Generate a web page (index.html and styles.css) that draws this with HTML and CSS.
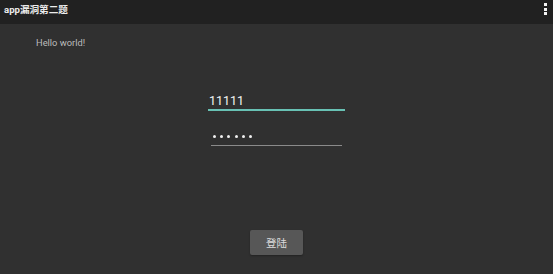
FILE: index.html
```html
<!DOCTYPE html>
<html lang="zh">
<head>
    <meta charset="UTF-8">
    <meta name="viewport" content="width=device-width, initial-scale=1.0">
    <title>app漏洞第二题</title>
    <link rel="stylesheet" href="styles.css">
</head>
<body>

    <div class="toolbar">
        <span class="title">app漏洞第二题</span>
        <div class="menu">
            <i></i><i></i><i></i>
        </div>
    </div>

    <div class="content">
        <p class="hello">Hello world!</p>

        <div class="form">
            <div class="field field-active">11111</div>
            <div class="field field-password">
                <i></i><i></i><i></i><i></i><i></i><i></i>
            </div>
            <button class="login">登陆</button>
        </div>
    </div>

</body>
</html>
```

FILE: styles.css
```css
body {
    margin: 0;
    height: 100vh;
    background-color: #303030;
    font-family: Roboto, "Noto Sans CJK SC", sans-serif;
    overflow: hidden;
}

/* Action bar */
.toolbar {
    height: 24px;
    background-color: #212121;
    display: flex;
    justify-content: space-between;
    align-items: center;
    padding: 0 6px 0 4px;
}
.title {
    color: #ececec;
    font-size: 9.6px;
    font-weight: bold;
    margin-top: -6px;
}
.menu {
    display: flex;
    flex-direction: column;
    gap: 1.5px;
    margin-top: -6px;
}
.menu i {
    width: 3px;
    height: 3px;
    background-color: #f5f5f5;
}

.content {
    padding: 13px 36px 0;
}
.hello {
    margin: 0;
    font-size: 9.3px;
    line-height: 12px;
    color: #bdbdbd;
}

/* Login form */
.form {
    display: flex;
    flex-direction: column;
    align-items: center;
    margin-left: -36px;
    margin-right: -36px;
}
.field {
    box-sizing: border-box;
}
.field-active {
    width: 137px;
    margin-top: 45px;
    padding: 0 0 1px 1px;
    font-size: 12.5px;
    line-height: 14px;
    color: #f2f2f2;
    border-bottom: 2px solid #68c1b4;
}
.field-password {
    width: 131px;
    margin-top: 18px;
    height: 17px;
    padding: 0 0 2px 2px;
    display: flex;
    align-items: center;
    gap: 4.2px;
    border-bottom: 1px solid #8a8a8a;
}
.field-password i {
    width: 3px;
    height: 3px;
    border-radius: 50%;
    background-color: #f0f0f0;
}
.login {
    margin-top: 84px;
    width: 53px;
    height: 25px;
    border: none;
    border-radius: 2px;
    background-color: #575757;
    color: #dcdcdc;
    font-family: Roboto, "Noto Sans CJK SC", sans-serif;
    font-size: 10.5px;
    box-shadow: 0 1px 2px rgba(0, 0, 0, 0.3);
}
```
